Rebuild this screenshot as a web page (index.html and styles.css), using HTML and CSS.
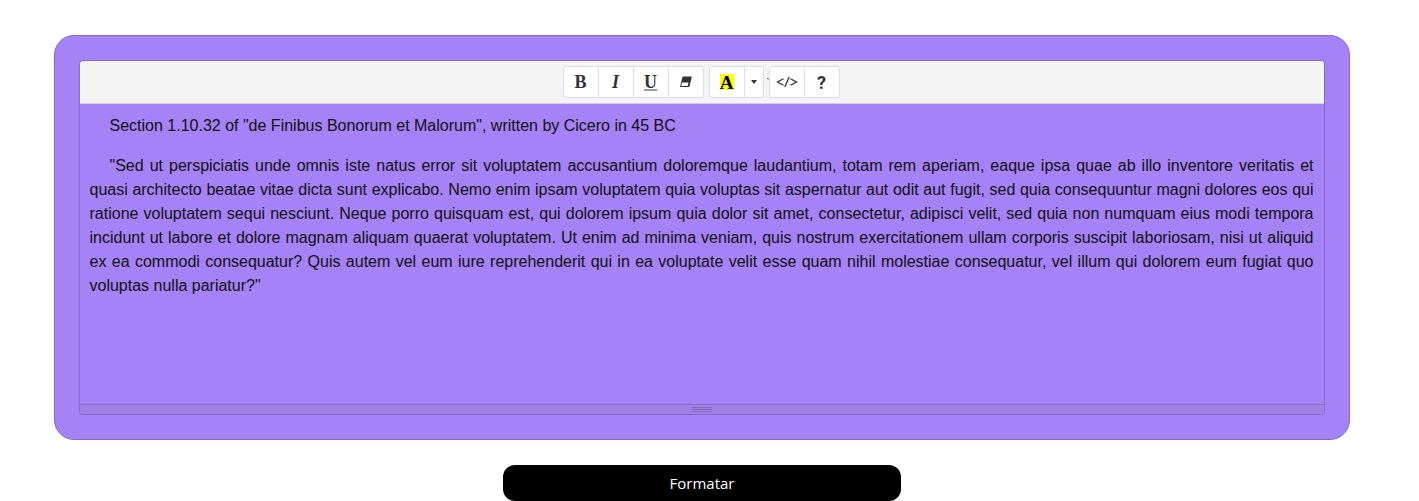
FILE: index.html
```html
<!DOCTYPE html>
<html lang="pt"><head><meta charset="utf-8"><title>Editor</title><link rel="stylesheet" href="styles.css"></head>
<body>
<main class="panel">
  <section class="editor">
    <div class="toolbar">
      <div class="group">
        <button class="tool serif">B</button><button class="tool serif italic">I</button><button class="tool serif underline">U</button>
        <button class="tool"><svg width="14" height="14" viewBox="0 0 14 14"><path d="M4.200 1.500H12.200Q12.900 1.500 12.700 2.200L10.500 11.200Q10.300 12 9.500 12H1.700Q1 12 1.200 11.200L3.400 2.200Q3.600 1.500 4.200 1.500ZM3.100 7.600L2.300 10.900H8.700L9.500 7.600Z" fill="#333" fill-rule="evenodd"/></svg></button>
      </div>
      <div class="group color">
        <button class="tool serif"><span class="mark">A</span></button><button class="tool drop"><i class="caret"></i></button>
        <i class="stray"></i>
      </div>
      <div class="group">
        <button class="tool code"><svg width="22" height="14" viewBox="0 0 22 14"><path d="M7.500 3.700L1.500 7L7.500 10.300M14.500 3.700L20.500 7L14.500 10.300M13.200 2L8.800 12" fill="none" stroke="#333" stroke-width="1.300"/></svg></button><button class="tool help">?</button>
      </div>
    </div>
    <div class="content">
      <p>Section 1.10.32 of "de Finibus Bonorum et Malorum", written by Cicero in 45 BC</p>
      <p>"Sed ut perspiciatis unde omnis iste natus error sit voluptatem accusantium doloremque laudantium, totam rem aperiam, eaque ipsa quae ab illo inventore veritatis et quasi architecto beatae vitae dicta sunt explicabo. Nemo enim ipsam voluptatem quia voluptas sit aspernatur aut odit aut fugit, sed quia consequuntur magni dolores eos qui ratione voluptatem sequi nesciunt. Neque porro quisquam est, qui dolorem ipsum quia dolor sit amet, consectetur, adipisci velit, sed quia non numquam eius modi tempora incidunt ut labore et dolore magnam aliquam quaerat voluptatem. Ut enim ad minima veniam, quis nostrum exercitationem ullam corporis suscipit laboriosam, nisi ut aliquid ex ea commodi consequatur? Quis autem vel eum iure reprehenderit qui in ea voluptate velit esse quam nihil molestiae consequatur, vel illum qui dolorem eum fugiat quo voluptas nulla pariatur?"</p>
    </div>
    <div class="resize"><i></i><i></i><i></i></div>
  </section>
</main>
<button class="submit">Formatar</button>
</body></html>
```
FILE: styles.css
```css
* { box-sizing: border-box; }
body { margin: 0; height: 501px; overflow: hidden; background: #fff; font-family: "Liberation Sans", Arial, sans-serif; }
.panel { width: 1296px; height: 405px; margin: 35px 0 0 54px; padding: 24px; border: 1px solid #8869c8; border-radius: 20px; background: #a582f5; }
.editor { height: 355px; border: 1px solid #8869c8; border-radius: 4px; overflow: hidden; }
.toolbar { height: 43px; padding: 5px 2px 0 0; display: flex; justify-content: center; gap: 5px; background: #f4f4f4; border-bottom: 1px solid #d4d0dc; }
.group { display: flex; height: 32px; border: 1px solid #dae0e5; border-radius: 3px; background: #fff; position: relative; }
.tool { width: 35px; padding: 0; border: 0; border-right: 1px solid #dae0e5; background: none; color: #333; display: flex; align-items: center; justify-content: center; }
.tool:last-of-type { border-right: 0; width: 34px; }
.serif { font: bold 18px "Liberation Serif", serif; }
.italic { font-style: italic; }
.underline { text-decoration: underline; text-decoration-color: #999; text-decoration-thickness: 2px; }
.mark { background: #ff0; color: #000; width: 14px; height: 16px; line-height: 17px; font-size: 19px; }
.tool.drop:last-of-type { width: 18px; }
.caret { border: 3px solid transparent; border-top: 4px solid #333; border-bottom: 0; margin-top: -1px; }
.stray { position: absolute; left: 57px; top: 11px; width: 2px; height: 2px; background: #555; clip-path: polygon(0 0, 100% 0, 100% 100%); }
.help { font: bold 18px Roboto, sans-serif; }
.content { height: 300px; padding: 10px 10.5px 10px 9.5px; font-size: 16px; line-height: 24px; color: #111; text-align: justify; }
.content p { margin: 0 0 16px; text-indent: 20px; }
.resize { height: 10px; background: #a082e6; border-top: 1px solid #8869c8; padding-top: 2px; display: flex; flex-direction: column; align-items: center; gap: 1px; }
.resize i { width: 20px; height: 1px; background: #8469bd; }
.submit { display: block; width: 398px; height: 36px; margin: 25px 0 0 503px; padding: 0; border: 0; border-radius: 12px; background: #000; color: #fff; font: 15px "Open Sans", sans-serif; }
```
